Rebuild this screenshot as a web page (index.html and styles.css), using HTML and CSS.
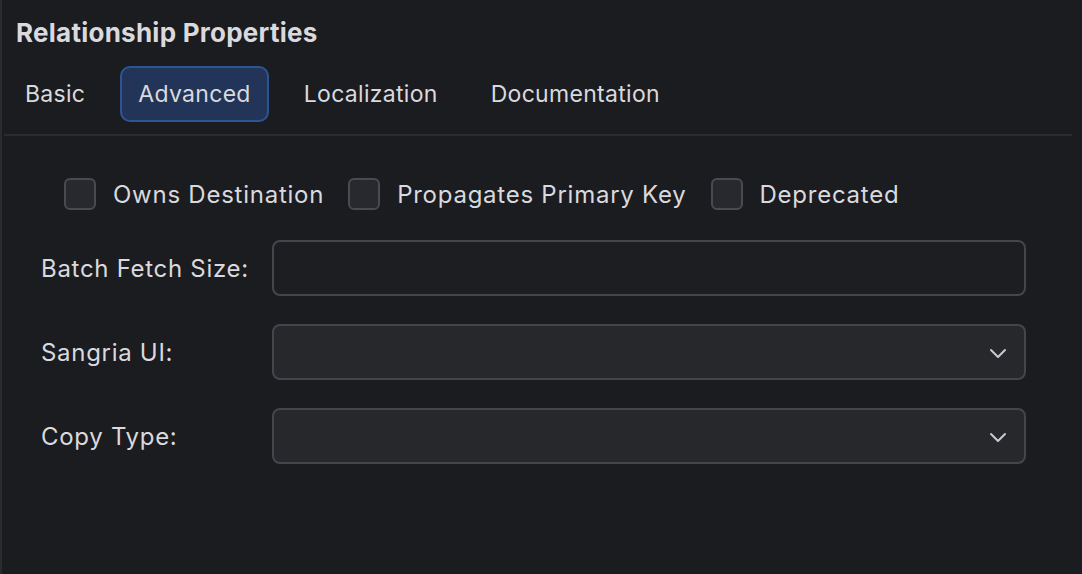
FILE: index.html
```html
<!DOCTYPE html>
<html lang="en">
<head>
    <meta charset="UTF-8">
    <meta name="viewport" content="width=device-width, initial-scale=1.0">
    <title>Relationship Properties</title>
    <link rel="stylesheet" href="styles.css">
</head>
<body>
    <div class="panel">
        <h1>Relationship Properties</h1>
        <div class="tabs">
            <button class="tab">Basic</button>
            <button class="tab active">Advanced</button>
            <button class="tab">Localization</button>
            <button class="tab">Documentation</button>
        </div>
        <div class="tab-body">
            <div class="checks">
                <label class="check"><input type="checkbox"><span class="box"></span>Owns Destination</label>
                <label class="check"><input type="checkbox"><span class="box"></span>Propagates Primary Key</label>
                <label class="check"><input type="checkbox"><span class="box"></span>Deprecated</label>
            </div>
            <div class="form-row">
                <label for="batchSize">Batch Fetch Size:</label>
                <input type="text" id="batchSize" class="field">
            </div>
            <div class="form-row">
                <label for="sangriaUi">Sangria UI:</label>
                <div class="select">
                    <select id="sangriaUi"></select>
                    <svg class="chevron" width="18" height="12" viewBox="0 0 18 12"><path d="M2 3l7 7 7-7" fill="none" stroke="#c9cad0" stroke-width="2" stroke-linecap="round" stroke-linejoin="round"/></svg>
                </div>
            </div>
            <div class="form-row">
                <label for="copyType">Copy Type:</label>
                <div class="select">
                    <select id="copyType"></select>
                    <svg class="chevron" width="18" height="12" viewBox="0 0 18 12"><path d="M2 3l7 7 7-7" fill="none" stroke="#c9cad0" stroke-width="2" stroke-linecap="round" stroke-linejoin="round"/></svg>
                </div>
            </div>
        </div>
    </div>
</body>
</html>
```

FILE: styles.css
```css
html, body {
    height: 100%;
}
body {
    margin: 0;
    background: #1b1c1f;
    color: #d9d9de;
    font-family: Inter, "Noto Sans", sans-serif;
}
.panel {
    height: 100%;
    box-sizing: border-box;
    border-left: 2px solid #2a2b2e;
    padding: 16px 10px 0 2px;
}
h1 {
    margin: 0 0 0 12px;
    font-size: 26px;
    font-weight: 700;
    letter-spacing: 0.25px;
    line-height: 34px;
}
.tabs {
    display: flex;
    gap: 17px;
    margin-top: 16px;
    padding: 0 0 12px 3px;
    border-bottom: 2px solid #2a2b2f;
}
.tab {
    font-family: inherit;
    font-size: 23px;
    letter-spacing: 0.3px;
    color: #d9d9de;
    background: none;
    border: 2px solid transparent;
    border-radius: 10px;
    padding: 0 16px;
    height: 56px;
    cursor: pointer;
}
.tab.active {
    background: #223558;
    border-color: #2f5496;
}
.tab-body {
    padding: 42px 46px 0 37px;
}
.checks {
    display: flex;
    gap: 24px;
    padding-left: 23px;
    margin-bottom: 30px;
}
.check {
    display: flex;
    align-items: center;
    gap: 17px;
    font-size: 24px;
    letter-spacing: 0.75px;
}
.check input {
    display: none;
}
.check .box {
    width: 28px;
    height: 28px;
    border: 2px solid #4a4b51;
    background: #28292e;
    border-radius: 6px;
}
.form-row {
    display: flex;
    align-items: center;
    margin-bottom: 28px;
}
.form-row label {
    width: 231px;
    font-size: 24px;
    letter-spacing: 0.7px;
}
.field, .select {
    flex: 1;
    height: 56px;
    box-sizing: border-box;
    border: 2px solid #45464c;
    border-radius: 8px;
}
.field {
    background: #1d1e21;
    color: #d9d9de;
    font: inherit;
    font-size: 22px;
    padding: 0 14px;
}
.select {
    position: relative;
    background: #27282c;
}
.select select {
    width: 100%;
    height: 100%;
    background: transparent;
    border: none;
    appearance: none;
}
.chevron {
    position: absolute;
    right: 17px;
    top: 21px;
}
```
